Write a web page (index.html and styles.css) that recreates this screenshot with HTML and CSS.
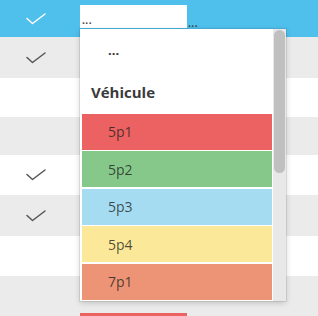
FILE: index.html
```html
<!DOCTYPE html>
<html lang="fr">
<head>
<meta charset="utf-8">
<title>Véhicule</title>
<link rel="stylesheet" href="styles.css">
</head>
<body>
<div class="grid">
  <div class="row row-selected h37">
    <div class="check-cell"><svg class="check check-light" width="20" height="12" viewBox="0 0 20 12"><polyline points="1,5.5 6.5,10.5 19,1" /></svg></div>
    <div class="value-cell top-cell">
      <div class="input"><span class="dots">...</span></div>
      <span class="dots after">...</span>
    </div>
  </div>
  <div class="row row-alt h41">
    <div class="check-cell"><svg class="check" width="20" height="12" viewBox="0 0 20 12"><polyline points="1,5.5 6.5,10.5 19,1" /></svg></div>
    <div class="value-cell"></div>
  </div>
  <div class="row h39"><div class="check-cell"></div><div class="value-cell"></div></div>
  <div class="row row-alt h38"><div class="check-cell"></div><div class="value-cell"></div></div>
  <div class="row h40">
    <div class="check-cell"><svg class="check" width="20" height="12" viewBox="0 0 20 12"><polyline points="1,5.5 6.5,10.5 19,1" /></svg></div>
    <div class="value-cell"></div>
  </div>
  <div class="row row-alt h41">
    <div class="check-cell"><svg class="check" width="20" height="12" viewBox="0 0 20 12"><polyline points="1,5.5 6.5,10.5 19,1" /></svg></div>
    <div class="value-cell"></div>
  </div>
  <div class="row h40"><div class="check-cell"></div><div class="value-cell"></div></div>
  <div class="row row-alt h40">
    <div class="check-cell"></div>
    <div class="value-cell"><div class="peek-red"></div></div>
  </div>
</div>

<div class="dropdown">
  <div class="list">
    <div class="opt-dots">...</div>
    <div class="group-head">Véhicule</div>
    <div class="opt c-red">5p1</div>
    <div class="opt c-green">5p2</div>
    <div class="opt c-blue">5p3</div>
    <div class="opt c-yellow">5p4</div>
    <div class="opt c-orange">7p1</div>
  </div>
  <div class="track"><div class="thumb"></div></div>
</div>
</body>
</html>
```
FILE: styles.css
```css
html, body {
  margin: 0;
  padding: 0;
  background: #ffffff;
  font-family: "Open Sans", "Noto Sans", sans-serif;
  overflow: hidden;
}
.grid {
  width: 318px;
  display: flex;
  flex-direction: column;
}
.row {
  display: flex;
  background: #ffffff;
}
.row-alt { background: #ebebeb; }
.row-selected { background: #4fbfec; }
.h37 { height: 37px; }
.h38 { height: 38px; }
.h39 { height: 39px; }
.h40 { height: 40px; }
.h41 { height: 41px; }
.check-cell {
  width: 80px;
  display: flex;
  align-items: center;
  justify-content: center;
  padding-right: 8px;
  box-sizing: border-box;
}
.check polyline {
  fill: none;
  stroke: #555555;
  stroke-width: 1.5;
  stroke-linecap: round;
  stroke-linejoin: round;
}
.check-light polyline { stroke: #ffffff; }
.value-cell {
  width: 108px;
  display: flex;
  flex-direction: column;
}
.top-cell {
  flex-direction: row;
  align-items: flex-start;
  padding-top: 5px;
  box-sizing: border-box;
  width: 130px;
}
.input {
  width: 107px;
  height: 23px;
  background: #ffffff;
  display: flex;
  align-items: flex-end;
  padding-left: 2px;
  box-sizing: border-box;
}
.dots {
  font-size: 10px;
  line-height: 10px;
  font-weight: 700;
  color: #3c3c3c;
  letter-spacing: 0.5px;
  margin-bottom: 3px;
}
.after {
  margin-top: 13px;
  margin-left: 1px;
}
.peek-red {
  margin-top: 37px;
  width: 107px;
  height: 3px;
  background: #ec6161;
}
.dropdown {
  position: absolute;
  left: 80px;
  top: 29px;
  width: 206px;
  height: 272px;
  background: #ffffff;
  display: flex;
  box-shadow: 0 0 0 1px rgba(0,0,0,0.08), 0 2px 6px rgba(0,0,0,0.18);
}
.list {
  width: 193px;
  padding-left: 2px;
  box-sizing: border-box;
  display: flex;
  flex-direction: column;
}
.opt-dots {
  height: 40px;
  padding-left: 26px;
  display: flex;
  align-items: center;
  font-size: 13px;
  font-weight: 700;
  color: #333333;
  margin-top: 1px;
}
.group-head {
  height: 44px;
  padding-left: 9px;
  display: flex;
  align-items: center;
  font-size: 15px;
  font-weight: 700;
  color: #3a3a3a;
}
.opt {
  width: 190px;
  height: 36px;
  margin-bottom: 1.5px;
  padding-left: 26px;
  box-sizing: border-box;
  display: flex;
  align-items: center;
  font-size: 14px;
  color: rgba(30, 30, 30, 0.78);
}
.c-red { background: #ec6161; }
.c-green { background: #85c88a; }
.c-blue { background: #a5dcf2; }
.c-yellow { background: #fbe899; }
.c-orange { background: #ee9476; }
.track {
  width: 13px;
  height: 100%;
  background: #e8e8e8;
  display: flex;
  justify-content: center;
}
.thumb {
  width: 11px;
  height: 143px;
  margin-top: 1px;
  border-radius: 6px;
  background: #c0c0c0;
}
```
